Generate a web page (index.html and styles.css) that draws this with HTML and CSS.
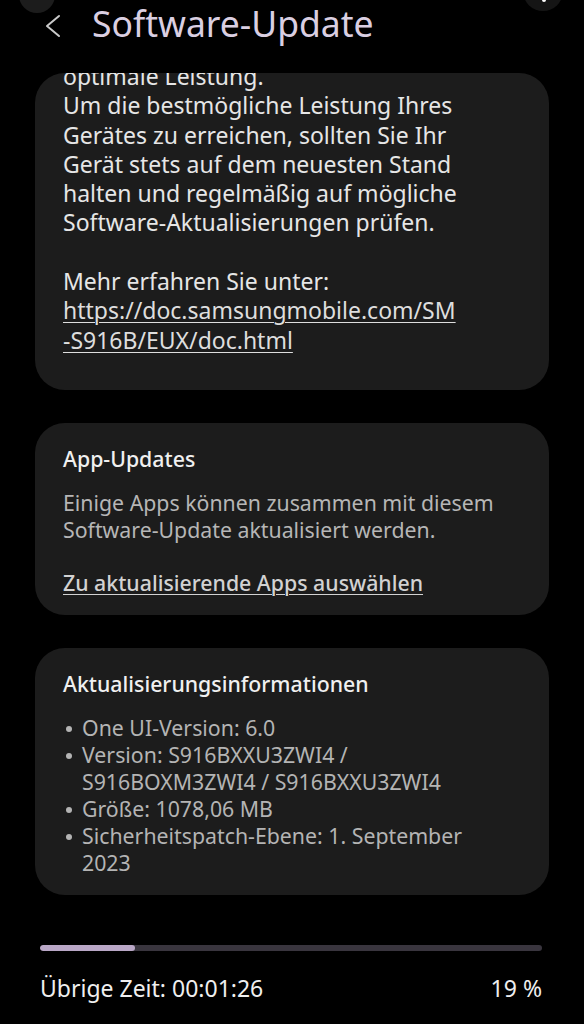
FILE: index.html
```html
<!DOCTYPE html>
<html lang="de">

<head>
    <meta charset="UTF-8">
    <meta name="viewport" content="width=device-width, initial-scale=1.0">
    <title>Software-Update</title>
    <link rel="stylesheet" href="styles.css">
</head>

<body>

    <header class="topbar">
        <span class="edge-btn edge-btn-left"></span>
        <span class="edge-btn edge-btn-right"><span class="edge-dot"></span></span>
        <svg class="back" width="18" height="24" viewBox="0 0 18 24">
            <polyline points="15,2 3,12 15,22" fill="none" stroke="#c9c9c9" stroke-width="2" stroke-linecap="round" stroke-linejoin="round" />
        </svg>
        <h1>Software-Update</h1>
    </header>

    <main class="content">
        <section class="card card-lead">
            <p class="lead-text">
                optimale Leistung.<br>
                Um die bestmögliche Leistung Ihres<br>
                Gerätes zu erreichen, sollten Sie Ihr<br>
                Gerät stets auf dem neuesten Stand<br>
                halten und regelmäßig auf mögliche<br>
                Software-Aktualisierungen prüfen.<br>
                <br>
                Mehr erfahren Sie unter:<br>
                <a href="#">https://doc.samsungmobile.com/SM<br>-S916B/EUX/doc.html</a>
            </p>
        </section>

        <section class="card">
            <h2>App-Updates</h2>
            <p class="card-text">
                Einige Apps können zusammen mit diesem<br>
                Software-Update aktualisiert werden.
            </p>
            <a class="card-link" href="#">Zu aktualisierende Apps auswählen</a>
        </section>

        <section class="card">
            <h2>Aktualisierungsinformationen</h2>
            <ul class="info-list">
                <li>One UI-Version: 6.0</li>
                <li>Version: S916BXXU3ZWI4 /<br>S916BOXM3ZWI4 / S916BXXU3ZWI4</li>
                <li>Größe: 1078,06 MB</li>
                <li>Sicherheitspatch-Ebene: 1. September<br>2023</li>
            </ul>
        </section>
    </main>

    <footer class="progress">
        <div class="progress-track">
            <div class="progress-fill" style="width: 19%"></div>
        </div>
        <div class="progress-info">
            <span>Übrige Zeit: 00:01:26</span>
            <span>19 %</span>
        </div>
    </footer>

</body>

</html>
```
FILE: styles.css
```css
body {
    font-family: 'Noto Sans', 'Open Sans', sans-serif;
    margin: 0;
    padding: 0;
    background-color: #000;
    color: #e4e4e4;
    width: 584px;
    height: 1024px;
    overflow: hidden;
}

.topbar {
    position: relative;
    display: flex;
    align-items: flex-start;
    height: 73px;
    padding-left: 44px;
    box-sizing: border-box;
}

.back {
    margin-top: 14px;
    flex: none;
}

.topbar h1 {
    margin: 0 0 0 30px;
    font-size: 35.5px;
    line-height: 46px;
    font-weight: 400;
    color: #dacfe2;
}

/* round buttons of the system bar, mostly off screen */
.edge-btn {
    position: absolute;
    border-radius: 50%;
}

.edge-btn-left {
    left: 19px;
    top: -23px;
    width: 36px;
    height: 36px;
    background-color: #1c1c1c;
}

.edge-btn-right {
    left: 523px;
    top: -29px;
    width: 40px;
    height: 40px;
    background-color: #151515;
}

.edge-dot {
    position: absolute;
    left: 19px;
    top: 27px;
    width: 4px;
    height: 4px;
    border-radius: 50%;
    background-color: #fff;
}

.content {
    display: flex;
    flex-direction: column;
    gap: 33px;
    margin: 0 35px;
}

.card {
    background-color: #1c1c1c;
    border-radius: 30px;
    padding: 22px 28px 19px;
    overflow: hidden;
}

.card-lead {
    padding: 0 28px 35px;
}

.lead-text {
    margin: -11px 0 0;
    font-size: 23px;
    line-height: 29.3px;
    color: #e6e6e6;
    white-space: nowrap;
}

.lead-text a {
    color: #dedede;
    text-decoration: underline;
    text-decoration-thickness: 1px;
    text-underline-offset: 3px;
}

.card h2 {
    margin: 0 0 17px;
    font-size: 21.3px;
    line-height: 27px;
    font-weight: 500;
    color: #f0f0f0;
}

.card-text {
    margin: 0 0 26px;
    font-size: 21.3px;
    line-height: 27px;
    color: #b6b6b6;
    white-space: nowrap;
}

.card-link {
    display: block;
    font-size: 21.3px;
    line-height: 27px;
    font-weight: 500;
    color: #d2d2d2;
    text-decoration: underline;
    text-decoration-thickness: 1px;
    text-underline-offset: 3px;
}

.info-list {
    list-style: none;
    margin: 0;
    padding: 0;
    font-size: 21.3px;
    line-height: 27px;
    color: #b4b4b4;
    white-space: nowrap;
}

.info-list li {
    display: flex;
}

.info-list li::before {
    content: "";
    flex: none;
    width: 6px;
    height: 6px;
    border-radius: 50%;
    background-color: #b4b4b4;
    margin: 12px 10px 0 3px;
}

.progress {
    margin: 50px 42px 0 40px;
}

.progress-track {
    height: 6px;
    border-radius: 3px;
    background-color: #39353e;
    overflow: hidden;
}

.progress-fill {
    height: 100%;
    border-radius: 3px;
    background-color: #b9a7c6;
}

.progress-info {
    display: flex;
    justify-content: space-between;
    margin-top: 22px;
    font-size: 23px;
    line-height: 30px;
    color: #efefef;
}
```
